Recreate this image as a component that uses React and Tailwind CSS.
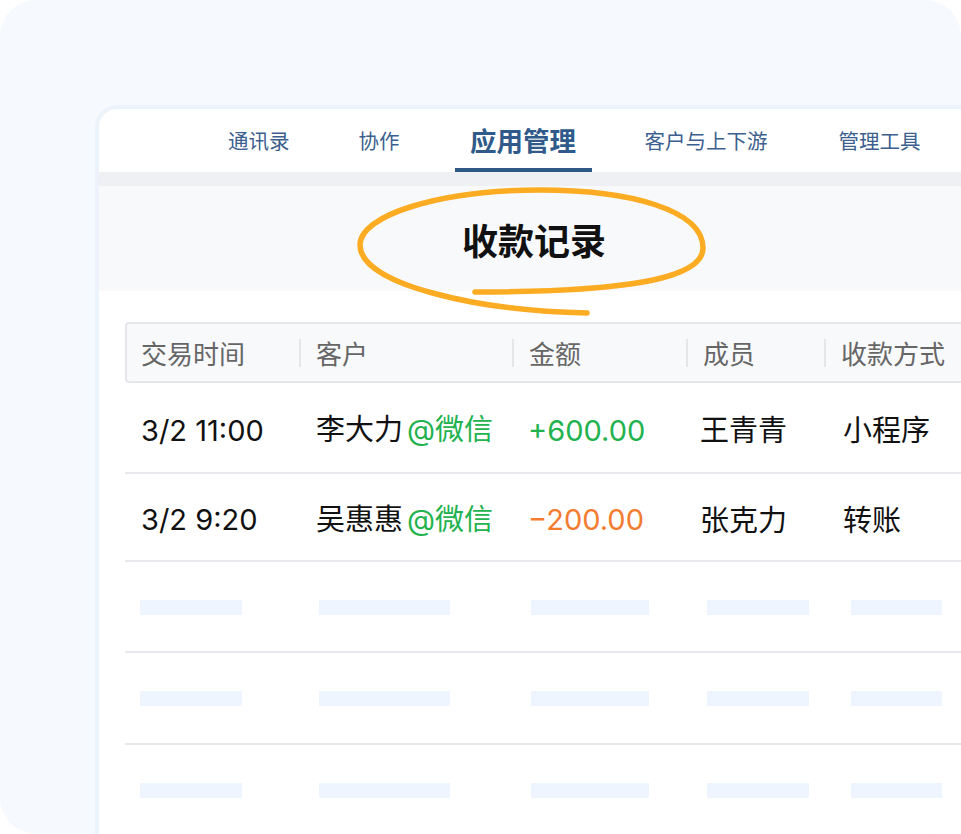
import React from "react";

const font = { fontFamily: '"Noto Sans CJK SC", "Noto Sans", sans-serif' };
const latin = { fontFamily: 'Inter, "Noto Sans CJK SC", sans-serif' };

const cols = [174, 213, 174, 138, 180];

function Ellipse() {
  return (
    <svg
      className="absolute left-[241px] top-[-6px] pointer-events-none"
      width="380"
      height="140"
      viewBox="0 0 380 140"
      fill="none"
    >
      <path
        d="M135,112 C250,112 363,105 363,68 C363,30 290,10 200,10 C100,10 20,35 20,65 C20,105 140,131 247,133"
        stroke="#fcac22"
        strokeWidth="5.5"
        strokeLinecap="round"
      />
    </svg>
  );
}

function Tab({ children, className }) {
  return (
    <div className={"h-full flex items-center text-[20.5px] text-[#3d5f8e] " + (className || "")}>
      {children}
    </div>
  );
}

function Bars({ h }) {
  const bars = [
    { ml: "ml-[15px]", w: "w-[102px]" },
    { ml: "ml-[20px]", w: "w-[131px]" },
    { ml: "ml-[19px]", w: "w-[118px]" },
    { ml: "ml-[21px]", w: "w-[102px]" },
    { ml: "ml-[27px]", w: "w-[91px]" },
  ];
  return (
    <div className={"flex items-center pt-[1px] border-b-2 border-[#e8e9ec] " + h}>
      {bars.map((b, i) => (
        <div key={i} style={{ width: cols[i] }} className="shrink-0 flex items-center">
          <div className={"h-[15px] bg-[#eef5fe] " + b.ml + " " + b.w}></div>
        </div>
      ))}
    </div>
  );
}

function Row({ h, time, name, amount, amountClass, member, method }) {
  return (
    <div className={"flex items-center pt-[3px] border-b-2 border-[#e8e9ec] text-[29px] text-[#111] " + h}>
      <div style={{ width: cols[0], ...latin }} className="shrink-0 pl-[16px] pt-[3px]">{time}</div>
      <div style={{ width: cols[1] }} className="shrink-0 pl-[17px] whitespace-nowrap">
        {name}
        <span className="text-[#22b24e] pl-[4px]" style={latin}>@微信</span>
      </div>
      <div style={{ width: cols[2], ...latin }} className={"shrink-0 pl-[16px] pt-[3px] " + amountClass}>{amount}</div>
      <div style={{ width: cols[3] }} className="shrink-0 pl-[14px]">{member}</div>
      <div style={{ width: cols[4] }} className="shrink-0 pl-[19px]">{method}</div>
    </div>
  );
}

export default function App() {
  const headers = ["交易时间", "客户", "金额", "成员", "收款方式"];
  return (
    <div className="w-[961px] h-[834px] bg-white" style={font}>
      <div className="w-full h-full rounded-[36px] bg-[#f6f9fe] overflow-hidden pt-[105px] pl-[95px]">
        <div className="w-[900px] h-[760px] border-t-4 border-l-4 border-[#edf3fb] rounded-tl-[22px] bg-white overflow-hidden">
          {/* tab bar */}
          <div className="h-[63px] flex items-stretch">
            <Tab className="ml-[129px]">通讯录</Tab>
            <Tab className="ml-[69px]">协作</Tab>
            <div className="ml-[55px] h-full flex items-center px-[15.5px] border-b-4 border-[#2e5987] pt-[3px] text-[26.5px] font-bold text-[#2f5a8a]">
              应用管理
            </div>
            <Tab className="ml-[53px]">客户与上下游</Tab>
            <Tab className="ml-[71px]">管理工具</Tab>
          </div>
          <div className="h-[14px] bg-[#eef0f4]"></div>
          {/* title */}
          <div className="relative h-[105px] bg-[#f8f9fb] flex items-center">
            <div className="ml-[363px] text-[36px] font-bold text-[#111]">收款记录</div>
            <Ellipse />
          </div>
          {/* table */}
          <div className="ml-[26px] mt-[31px] w-[900px]">
            <div className="h-[61px] flex items-center bg-[#f8f9fb] border-2 border-[#e4e6ea] rounded-[4px] text-[26px] text-[#666]">
              {headers.map((h, i) => (
                <div key={h} style={{ width: i === 0 ? cols[0] - 2 : cols[i] }} className="shrink-0 flex items-center">
                  {i > 0 && <div className="w-[2px] h-[28px] bg-[#e4e6ea]"></div>}
                  <div className={i === 0 ? "pl-[14px]" : "pl-[15px]"}>{h}</div>
                </div>
              ))}
            </div>
            <Row h="h-[91px]" time="3/2 11:00" name="李大力" amount="+600.00" amountClass="text-[#22b24e]" member="王青青" method="小程序" />
            <Row h="h-[88px]" time="3/2 9:20" name="吴惠惠" amount="−200.00" amountClass="text-[#f47c30]" member="张克力" method="转账" />
            <Bars h="h-[91px]" />
            <Bars h="h-[92px]" />
            <Bars h="h-[92px]" />
          </div>
        </div>
      </div>
    </div>
  );
}
